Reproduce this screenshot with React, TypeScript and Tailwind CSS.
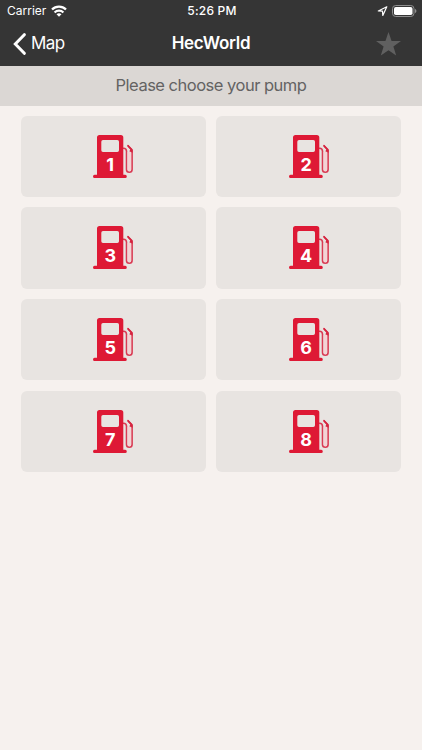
const pumps = [1, 2, 3, 4, 5, 6, 7, 8];

function WifiIcon() {
  return (
    <svg width="16" height="12" viewBox="0 0 16 12" fill="none" stroke="#fff" strokeWidth="2.3">
      <path d="M1 4.500a10 10 0 0 1 14 0" />
      <path d="M3.600 7.500a6.300 6.300 0 0 1 8.800 0" />
      <path d="M8 11.800 5.500 9.300a3.700 3.700 0 0 1 5 0z" fill="#fff" stroke="none" />
    </svg>
  );
}

function LocationIcon() {
  return (
    <svg width="11" height="11" viewBox="0 0 11 11" fill="none" stroke="#fff" strokeWidth="1.200" strokeLinejoin="round">
      <path d="M9.800.8 1.300 5l4.200.2.300 4.200z" />
    </svg>
  );
}

function BatteryIcon() {
  return (
    <svg width="25" height="12" viewBox="0 0 25 12">
      <rect x=".5" y=".5" width="21.500" height="11" rx="3.200" fill="none" stroke="#8e8e8e" />
      <rect x="2" y="2" width="18.500" height="8" rx="1.800" fill="#fff" />
      <path d="M23 4v4c.8-.3 1.400-1.100 1.400-2S23.800 4.300 23 4z" fill="#8e8e8e" />
    </svg>
  );
}

function PumpIcon({ n }: { n: number }) {
  return (
    <svg width="40" height="43" viewBox="0 0 40 43">
      <path
        d="M30.500 13.200a3 3 0 0 1 3 3v18.300a2.800 2.800 0 0 0 5.600 0V15.300l-4.200-4.600"
        fill="none"
        stroke="#da3a53"
        strokeWidth="1.600"
        strokeLinecap="round"
      />
      <path d="M34.600 17h3.500v17.500a1.750 1.750 0 0 1-3.500 0z" fill="#f3d3d5" />
      <path d="m35.200 9.700 4.400 4.500v3.500l-3.300-1.500 1.100-1.800-2.900-3z" fill="#d62540" />
      <path
        fillRule="evenodd"
        fill="#de1935"
        d="M6.500 0h21.300a2.500 2.500 0 0 1 2.500 2.500v37.300h1.900a1.600 1.600 0 0 1 0 3.200H1.600a1.600 1.600 0 0 1 0-3.200H4V2.500A2.500 2.500 0 0 1 6.500 0zM10 5a1.700 1.700 0 0 0-1.700 1.700v8.600A1.700 1.700 0 0 0 10 17h14.300a1.700 1.700 0 0 0 1.700-1.700V6.700A1.700 1.700 0 0 0 24.300 5z"
      />
      <text x="17.200" y="36" textAnchor="middle" fontSize="18" fontWeight="700" fill="#fff">
        {n}
      </text>
    </svg>
  );
}

export default function App() {
  return (
    <div className="flex h-[750px] w-full flex-col bg-[#f6f1ee] font-['Inter',sans-serif]">
      <header className="h-[65.500px] bg-[#353535] text-white">
        <div className="grid h-[22px] grid-cols-3 items-center pr-[5px] pl-[7px] text-[12px] leading-none">
          <div className="flex items-center gap-[5px]">
            <span>Carrier</span>
            <WifiIcon />
          </div>
          <span className="text-center font-medium tracking-[0.200px]">5:26 PM</span>
          <div className="flex items-center justify-end gap-[4px]">
            <LocationIcon />
            <BatteryIcon />
          </div>
        </div>
        <div className="grid h-[43px] grid-cols-3 items-center pr-[21px] pl-[13px]">
          <button className="flex items-center gap-[5px] text-[17px] leading-none tracking-[-0.600px]">
            <svg width="13" height="22" viewBox="0 0 13 22" fill="none" stroke="#fff" strokeWidth="3" strokeLinecap="round">
              <path d="M11.300 1.700 2.300 11l9 9.300" />
            </svg>
            Map
          </button>
          <h1 className="pl-[8px] text-center text-[17px] leading-none font-semibold tracking-[-0.250px]">HecWorld</h1>
          <svg className="justify-self-end" width="25" height="24" viewBox="0 0 26 25">
            <path d="m13 0 3.200 9.300H26l-7.900 5.900 2.900 9.400-8-5.700-8 5.700 2.900-9.400L0 9.300h9.800z" fill="#606060" />
          </svg>
        </div>
      </header>
      <div className="flex h-[40px] items-center justify-center bg-[#dbd7d4] text-[16.500px] tracking-[-0.500px] text-[#646363]">
        Please choose your pump
      </div>
      <main className="grid grid-cols-2 gap-x-[10.300px] gap-y-[10.300px] px-[21px] pt-[10.300px]">
        {pumps.map((n) => (
          <button key={n} className="flex h-[81.300px] items-center justify-center rounded-[6px] bg-[#e8e4e1] pb-[0.300px]">
            <PumpIcon n={n} />
          </button>
        ))}
      </main>
    </div>
  );
}
